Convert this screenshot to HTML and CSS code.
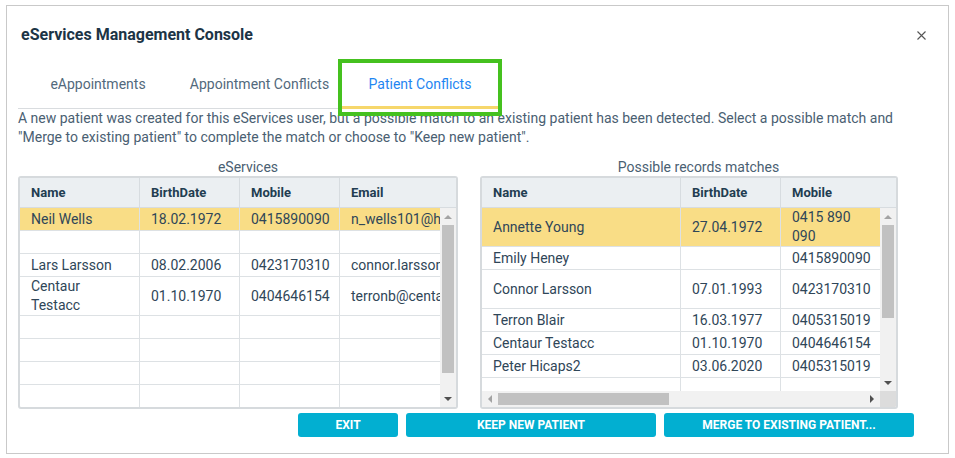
FILE: index.html
```html
<!DOCTYPE html>
<html lang="en">
<head>
<meta charset="utf-8">
<title>eServices Management Console</title>
<link rel="stylesheet" href="styles.css">
</head>
<body>
<div class="dialog">
  <div class="dialog-head">
    <h1 class="title">eServices Management Console</h1>
    <button class="close" type="button" aria-label="Close">
      <svg width="9" height="9" viewBox="0 0 9 9"><path d="M0.5 0.5L8.5 8.5M8.5 0.5L0.5 8.5" stroke="#555" stroke-width="1.1" fill="none"/></svg>
    </button>
  </div>

  <div class="tabs">
    <div class="tab tab-1">eAppointments</div>
    <div class="tab tab-2">Appointment Conflicts</div>
    <div class="tab tab-3 active">Patient Conflicts</div>
  </div>

  <p class="desc">A new patient was created for this eServices user, but a possible match to an existing patient has been detected. Select a possible match and "Merge to existing patient" to complete the match or choose to "Keep new patient".</p>

  <div class="panels">
    <section class="panel panel-left">
      <div class="panel-title">eServices</div>
      <div class="grid grid-left">
        <div class="grid-head">
          <div class="head-view">
            <table class="tbl">
              <colgroup><col class="c-name-l"><col class="c-100"><col class="c-100"><col class="c-email"></colgroup>
              <tr><th>Name</th><th>BirthDate</th><th>Mobile</th><th>Email</th></tr>
            </table>
          </div>
          <div class="head-filler"></div>
        </div>
        <div class="grid-body">
          <div class="viewport">
            <table class="tbl">
              <colgroup><col class="c-name-l"><col class="c-100"><col class="c-100"><col class="c-email"></colgroup>
              <tr class="sel"><td>Neil Wells</td><td>18.02.1972</td><td>0415890090</td><td class="nw">n_wells101@hotmail.com</td></tr>
              <tr><td></td><td></td><td></td><td></td></tr>
              <tr><td>Lars Larsson</td><td>08.02.2006</td><td>0423170310</td><td class="nw">connor.larsson@centaur.com.au</td></tr>
              <tr><td>Centaur Testacc</td><td>01.10.1970</td><td>0404646154</td><td class="nw">terronb@centaursoftware.com.au</td></tr>
              <tr><td></td><td></td><td></td><td></td></tr>
              <tr><td></td><td></td><td></td><td></td></tr>
              <tr><td></td><td></td><td></td><td></td></tr>
              <tr><td></td><td></td><td></td><td></td></tr>
            </table>
          </div>
          <div class="vscroll">
            <div class="arrow"><span class="tri up"></span></div>
            <div class="thumb thumb-l"></div>
            <div class="track"></div>
            <div class="arrow"><span class="tri down"></span></div>
          </div>
        </div>
      </div>
    </section>

    <section class="panel panel-right">
      <div class="panel-title">Possible records matches</div>
      <div class="grid grid-right">
        <div class="grid-head">
          <div class="head-view">
            <table class="tbl">
              <colgroup><col class="c-name-r"><col class="c-100"><col class="c-100"><col class="c-email"></colgroup>
              <tr><th>Name</th><th>BirthDate</th><th>Mobile</th><th>Email</th></tr>
            </table>
          </div>
          <div class="head-filler"></div>
        </div>
        <div class="grid-body grid-body-r">
          <div class="viewport">
            <table class="tbl">
              <colgroup><col class="c-name-r"><col class="c-100"><col class="c-100"><col class="c-email"></colgroup>
              <tr class="sel"><td>Annette Young</td><td>27.04.1972</td><td>0415 890 090</td><td class="nw">annette.young@example.com</td></tr>
              <tr><td>Emily Heney</td><td></td><td>0415890090</td><td class="nw">emily.heney@example.com</td></tr>
              <tr class="tall"><td>Connor Larsson</td><td>07.01.1993</td><td>0423170310</td><td class="nw">connor.larsson@example.com</td></tr>
              <tr><td>Terron Blair</td><td>16.03.1977</td><td>0405315019</td><td class="nw">terronb@example.com</td></tr>
              <tr><td>Centaur Testacc</td><td>01.10.1970</td><td>0404646154</td><td class="nw">terronb@example.com</td></tr>
              <tr><td>Peter Hicaps2</td><td>03.06.2020</td><td>0405315019</td><td class="nw">peter@example.com</td></tr>
              <tr><td></td><td></td><td></td><td></td></tr>
            </table>
          </div>
          <div class="vscroll">
            <div class="arrow"><span class="tri up"></span></div>
            <div class="thumb thumb-r"></div>
            <div class="track"></div>
            <div class="arrow"><span class="tri down"></span></div>
          </div>
        </div>
        <div class="hscroll-row">
          <div class="hscroll">
            <div class="harrow"><span class="tri left"></span></div>
            <div class="hthumb"></div>
            <div class="htrack"></div>
            <div class="harrow"><span class="tri right"></span></div>
          </div>
          <div class="corner"></div>
        </div>
      </div>
    </section>
  </div>

  <div class="actions">
    <button class="btn btn-exit" type="button">EXIT</button>
    <button class="btn btn-wide" type="button">KEEP NEW PATIENT</button>
    <button class="btn btn-wide" type="button">MERGE TO EXISTING PATIENT...</button>
  </div>
</div>
</body>
</html>
```

FILE: styles.css
```css
* { box-sizing: border-box; }

html, body {
  margin: 0;
  padding: 0;
  background: #ffffff;
}

body {
  font-family: Roboto, "Liberation Sans", Arial, sans-serif;
  color: #4a5f70;
}

.dialog {
  margin: 5px 0 0 6px;
  width: 943px;
  height: 449px;
  border: 1px solid #c9c9c9;
  padding: 20px 31px 0 11px;
  background: #fff;
}

/* header */
.dialog-head {
  display: flex;
  align-items: center;
  justify-content: space-between;
  margin-right: -9px;
  height: 18px;
}

.title {
  margin: 0 0 0 3px;
  font-size: 16px;
  line-height: 18px;
  font-weight: 700;
  color: #1c3446;
}

.close {
  width: 9px;
  height: 9px;
  padding: 0;
  border: 0;
  background: transparent;
  display: flex;
  cursor: pointer;
}

/* tabs */
.tabs {
  display: flex;
  width: 481px;
  margin-top: 18px;
  border-bottom: 1px solid #d9dcdf;
}

.tab {
  position: relative;
  height: 46px;
  padding-top: 14px;
  font-size: 14px;
  line-height: 16px;
  text-align: center;
  color: #52697c;
}

.tab-1 { width: 160px; }
.tab-2 { width: 163px; }
.tab-3 { width: 158px; }

.tab.active {
  color: #1f86f2;
}

.tab.active::before {
  content: "";
  position: absolute;
  left: 0;
  right: 0;
  bottom: -1px;
  height: 3px;
  background: #f6d76b;
}

.tab.active::after {
  content: "";
  position: absolute;
  left: -3px;
  right: -3px;
  top: -3px;
  bottom: -8px;
  border: 4px solid #45c11f;
  z-index: 2;
}

/* description */
.desc {
  margin: 0;
  font-size: 14px;
  line-height: 19px;
  color: #4a6072;
}

/* panels */
.panels {
  display: grid;
  grid-template-columns: 460px 1fr;
  gap: 2px;
  margin-top: 11px;
}

.panel-title {
  text-align: center;
  font-size: 14px;
  line-height: 18px;
  color: #4a6072;
}

.grid {
  border: 2px solid #d6dadd;
  border-radius: 3px;
  overflow: hidden;
  background: #fff;
}

.grid-left { width: 440px; height: 233px; }
.grid-right { width: 418px; height: 233px; }

.grid-head {
  display: flex;
  height: 30px;
  background: #ebeff2;
  border-bottom: 1px solid #d7dce0;
}

.head-view {
  flex: 1;
  overflow: hidden;
}

.head-filler {
  width: 16px;
  flex: none;
}

.grid-body {
  display: flex;
  height: 199px;
}

.grid-body-r {
  height: 183px;
}

.viewport {
  flex: 1;
  overflow: hidden;
}

.tbl {
  border-collapse: separate;
  border-spacing: 0;
  table-layout: fixed;
  width: max-content;
  font-size: 14px;
}

.c-name-l { width: 120px; }
.c-name-r { width: 199px; }
.c-100 { width: 100px; }
.c-email { width: 180px; }

.tbl th {
  height: 29px;
  padding: 0 11px;
  text-align: left;
  font-size: 13px;
  font-weight: 700;
  color: #223d51;
  border-right: 1px solid #d7dce0;
  line-height: 19px;
  vertical-align: middle;
}

.tbl tr { height: 23px; }
.tbl tr.tall { height: 39px; }

.tbl td {
  padding: 0 8px 0 11px;
  line-height: 19px;
  color: #2f4658;
  border-right: 1px solid #dde1e4;
  border-bottom: 1px solid #dde1e4;
  vertical-align: middle;
}

.tbl td.nw {
  white-space: nowrap;
  overflow: hidden;
}

.tbl tr.sel td {
  background: #f9dd86;
}

/* vertical scrollbar */
.vscroll {
  width: 16px;
  flex: none;
  display: flex;
  flex-direction: column;
  background: #f1f1f1;
}

.arrow {
  height: 17px;
  display: flex;
  align-items: center;
  justify-content: center;
}

.thumb {
  margin: 0 2px;
  background: #c1c1c1;
}

.thumb-l { height: 148px; }
.thumb-r { height: 93px; }

.track { flex: 1; }

.tri {
  width: 0;
  height: 0;
  border-style: solid;
}

.tri.up {
  border-width: 0 4px 4px 4px;
  border-color: transparent transparent #a3a3a3 transparent;
}

.tri.down {
  border-width: 4px 4px 0 4px;
  border-color: #505050 transparent transparent transparent;
}

.tri.left {
  border-width: 4px 4px 4px 0;
  border-color: transparent #a3a3a3 transparent transparent;
}

.tri.right {
  border-width: 4px 0 4px 4px;
  border-color: transparent transparent transparent #505050;
}

/* horizontal scrollbar */
.hscroll-row {
  display: flex;
  height: 16px;
}

.hscroll {
  flex: 1;
  display: flex;
  background: #f1f1f1;
}

.harrow {
  width: 16px;
  display: flex;
  align-items: center;
  justify-content: center;
}

.hthumb {
  width: 171px;
  margin: 2px 0;
  background: #c1c1c1;
}

.htrack { flex: 1; }

.corner {
  width: 16px;
  background: #dcdcdc;
}

/* actions */
.actions {
  display: flex;
  justify-content: flex-end;
  gap: 8px;
  margin-top: 4px;
  padding-right: 3px;
}

.btn {
  height: 24px;
  border: 0;
  border-radius: 3px;
  background: #02afd1;
  color: #fff;
  font-family: Roboto, "Liberation Sans", Arial, sans-serif;
  font-size: 12px;
  font-weight: 700;
  padding: 0;
  cursor: pointer;
}

.btn-exit { width: 100px; }
.btn-wide { width: 250px; }
```
